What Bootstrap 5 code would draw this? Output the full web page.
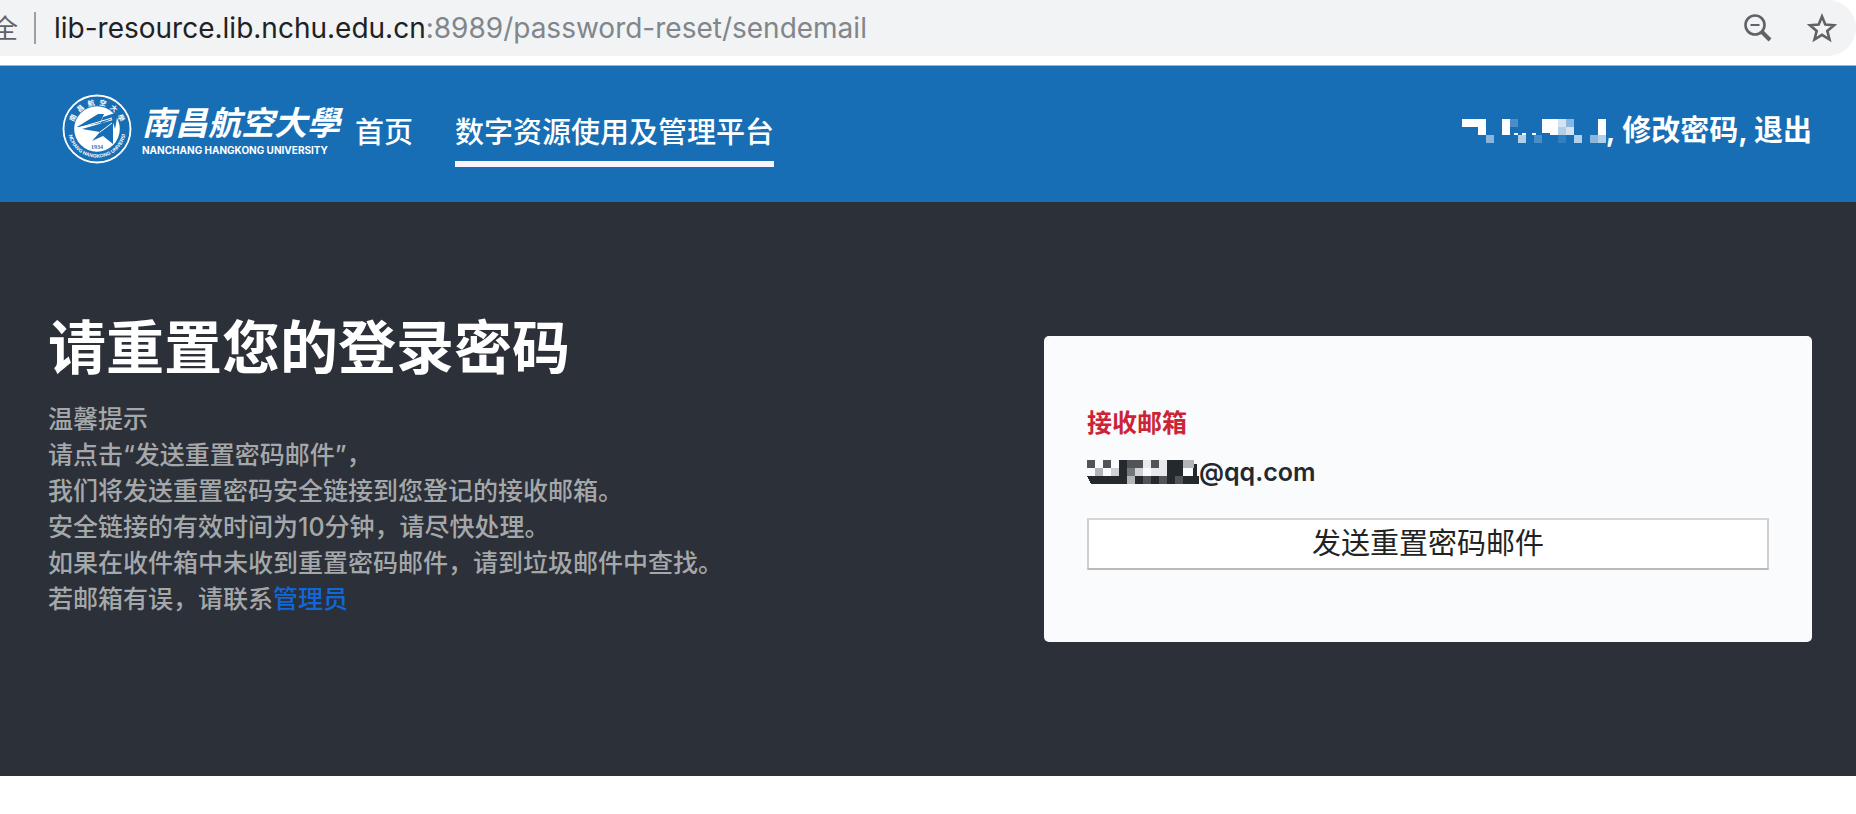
<!DOCTYPE html>
<html lang="zh-CN">
<head>
<meta charset="utf-8">
<meta name="viewport" content="width=device-width, initial-scale=1">
<title>重置密码</title>
<link rel="stylesheet" href="https://cdn.jsdelivr.net/npm/bootstrap@5.3.0/dist/css/bootstrap.min.css">
<style>
  body { font-family: Inter, "Noto Sans CJK SC", sans-serif; background: #fff; }
  .address-bar { height: 56px; background: #f1f3f4; border-radius: 0 28px 28px 0; color: #5f6368; padding-right: 18px; }
  .secure-label { width: 18px; font-size: 26px; }
  .bar-divider { width: 2px; height: 32px; background: #9aa0a6; margin: 0 18px 0 16px; }
  .url { font-size: 28px; color: #202124; }
  .url-rest { color: #80868b; }
  .tool-btn { color: #5f6368; width: 32px; height: 32px; }
  .site-header { margin-top: 9px; border-top: 1px solid #a9b0b6; background: #176eb5; min-height: 137px; padding: 0 44px 6px 62px; font-size: 29px; line-height: 40px; }
  .brand-seal { overflow: visible; }
  .brand-name { width: 198px; margin-left: 10px; }
  .brand-cn { font-size: 33px; line-height: 42px; font-style: italic; font-weight: 700; }
  .brand-en { font-size: 10px; line-height: 12px; font-weight: 700; }
  .site-menu { margin-left: 15px; gap: 42px; }
  .menu-link { color: #fff; font-weight: 500; text-decoration: none; border-bottom: 6px solid transparent; padding: 12px 0 8px; margin-top: 6px; }
  .menu-link.active { border-color: #fbf3fd; }
  .user-area, .user-area a { color: #fff; text-decoration: none; }
  .reset-section { background: #2c3038; padding: 110px 44px 134px 48px; }
  .reset-section h1 { font-size: 58px; line-height: 72px; margin-bottom: 17px; }
  .tips { font-size: 25px; line-height: 36px; color: #a5a8aa; font-weight: 500; }
  .tips a { color: #1068d8; text-decoration: none; }
  .reset-card { flex: 0 0 44%; max-width: 768px; margin-top: 24px; min-height: 306px; background: #fafbfd; border-radius: 5px; padding: 68px 43px 72px; }
  .mail-label { font-size: 25px; line-height: 38px; color: #cc2436; }
  .mail-value { font-size: 25px; line-height: 32px; color: #24292e; margin: 14px 0 30px; }
  .send-btn { height: 52px; background: #fff; border: 2px solid; border-color: #d6d6d6 #cfcfcf #b9b9b9; font-size: 29px; line-height: 42px; color: #222; padding: 0; }
</style>
</head>
<body>
<div class="address-bar d-flex align-items-center">
  <span class="secure-label d-flex justify-content-end overflow-hidden"><span>全</span></span>
  <span class="bar-divider"></span>
  <span class="url text-nowrap">lib-resource.lib.nchu.edu.cn<span class="url-rest">:8989/password-reset/sendemail</span></span>
  <div class="ms-auto d-flex gap-4 ps-3">
    <button type="button" class="tool-btn btn p-0 border-0 d-flex me-2" aria-label="缩放">
      <svg width="32" height="32" viewBox="0 0 32 32" fill="none" stroke="currentColor"><circle cx="13" cy="13" r="9.500" stroke-width="2.600"/><path d="M8.500 13h9" stroke-width="2"/><path d="M20 20l8 8" stroke-width="4"/></svg>
    </button>
    <button type="button" class="tool-btn btn p-0 border-0 d-flex" aria-label="收藏">
      <svg width="32" height="32" viewBox="0 0 32 32" fill="none" stroke="currentColor" stroke-width="2.600"><path d="M16 4.500l3.300 8.100 8.700.7-6.700 5.600 2.200 8.600-7.500-4.700-7.500 4.700 2.200-8.600L4 13.300l8.700-.7z"/></svg>
    </button>
  </div>
</div>

<header class="site-header d-flex align-items-center">
  <a href="#" class="d-flex align-items-center text-white text-decoration-none flex-shrink-0 pb-1" aria-label="南昌航空大学">
    <svg class="brand-seal" width="70" height="70" viewBox="0 0 70 70">
      <defs>
        <path id="ringBottom" d="M6.500 40A29 29 0 0 0 63.500 40"/>
      </defs>
      <circle cx="35" cy="35" r="33.500" fill="#176eb5" stroke="#fff" stroke-width="1.800"/>
      <circle cx="35" cy="35" r="22.800" fill="#fff"/>
      <path d="M15 33L36 20L42 20L38 29L17 33z" fill="#176eb5"/>
      <path d="M41 23L56 18L53 35L50 25L38 30z" fill="#176eb5"/>
      <path d="M20 35L51 26L51 50L41 42L30 47L38 38z" fill="#176eb5"/>
      <path d="M16 34L50 24M38 38L50 29" stroke="#fff" fill="none"/>
      <text x="35" y="55" font-size="6" font-weight="700" font-family="Liberation Serif, serif" text-anchor="middle" fill="#176eb5">1934</text>
      <g fill="#fff" font-size="7" font-weight="700" font-family="Noto Sans CJK SC, sans-serif" text-anchor="middle">
        <text x="35" y="11" transform="rotate(-65 35 35)">南</text>
        <text x="35" y="11" transform="rotate(-39 35 35)">昌</text>
        <text x="35" y="11" transform="rotate(-13 35 35)">航</text>
        <text x="35" y="11" transform="rotate(13 35 35)">空</text>
        <text x="35" y="11" transform="rotate(39 35 35)">大</text>
        <text x="35" y="11" transform="rotate(65 35 35)">學</text>
      </g>
      <text fill="#fff" font-size="5" font-weight="700" font-family="Liberation Sans, sans-serif" text-anchor="middle"><textPath href="#ringBottom" startOffset="50%">NANCHANG HANGKONG UNIVERSITY</textPath></text>
    </svg>
    <span class="brand-name d-flex flex-column text-nowrap">
      <span class="brand-cn">南昌航空大學</span>
      <span class="brand-en">NANCHANG HANGKONG UNIVERSITY</span>
    </span>
  </a>
  <nav class="site-menu d-flex text-nowrap">
    <a href="#" class="menu-link">首页</a>
    <a href="#" class="menu-link active">数字资源使用及管理平台</a>
  </nav>
  <div class="user-area ms-auto d-flex align-items-center fw-bold text-nowrap">
    <svg width="144" height="24" viewBox="0 0 18 3" shape-rendering="crispEdges" role="img" aria-label="用户名">
      <path fill="#fff" d="M0 0h3v2h-1v-1h-2zM5 0h1v2h-1zM10 0h2v2h-1v-.2h-1zM17 0h1v2h-1zM6.500 1.750h.5v.25h-.5zM7.500 1.750h.5v.25h-.5zM8.800 1.750h.5v.25h-.5z"/>
      <path fill="#4a8dc8" d="M6 0h1v1h-1zM9 2h1v1h-1z"/>
      <path fill="#d4e3f2" d="M12 0h1v1h-1zM13 1h1v1h-1z"/>
      <path fill="#8ab5dc" d="M13 0h1v1h-1zM3 2h1v1h-1zM16 2h1v1h-1z"/>
      <path fill="#b0cfe9" d="M12 1h1v1h-1zM7 2h1v1h-1zM14 2h1v1h-1zM17 2h1v1h-1z"/>
      <path fill="#2f7fc0" d="M12 2h1v1h-1z"/>
    </svg>
    <span>,&nbsp;<a href="#">修改密码</a>, <a href="#">退出</a></span>
  </div>
</header>

<main class="reset-section d-flex justify-content-between align-items-start">
  <div class="pe-4">
    <h1 class="text-white fw-bold">请重置您的登录密码</h1>
    <p class="tips mb-0">温馨提示<br>请点击“发送重置密码邮件”&#65292;<br>我们将发送重置密码安全链接到您登记的接收邮箱。<br>安全链接的有效时间为10分钟&#65292;请尽快处理。<br>如果在收件箱中未收到重置密码邮件&#65292;请到垃圾邮件中查找。<br>若邮箱有误&#65292;请联系<a href="#">管理员</a></p>
  </div>
  <form class="reset-card">
    <div class="mail-label fw-bold">接收邮箱</div>
    <div class="mail-value d-flex align-items-center fw-semibold">
      <svg width="112" height="24" viewBox="0 0 14 3" shape-rendering="crispEdges" role="img" aria-label="邮箱">
        <path fill="#24292d" d="M0 2h14v1H.5zM4 0h1v2h-1zM10 0h2v2h-2zM13.300.500h.5v2h-.5z"/>
        <path fill="#505458" d="M0 0h1v1H0zM2 0h1v1h-1zM5 0h2v1h-2zM8 0h1v1h-1zM7 2h1v1h-1zM9 2h1v1h-1zM11 2h1v1h-1z"/>
        <path fill="#74777a" d="M5 1h1v1h-1z"/>
        <path fill="#b2b4b6" d="M1 1h1v1h-1zM12 0h1.400v1h-1.400zM5 2h1v1h-1z"/>
        <path fill="#d0d1d2" d="M3 1h1v1h-1zM6 1h1v1h-1z"/>
        <path fill="#e8e9ea" d="M7 0h1v1h-1zM9 0h1v1h-1zM8 1h2v1h-2z"/>
      </svg>
      <span>@qq.com</span>
    </div>
    <button type="button" class="send-btn btn w-100 rounded-0">发送重置密码邮件</button>
  </form>
</main>
<script src="https://cdn.jsdelivr.net/npm/bootstrap@5.3.0/dist/js/bootstrap.bundle.min.js"></script>
</body>
</html>
